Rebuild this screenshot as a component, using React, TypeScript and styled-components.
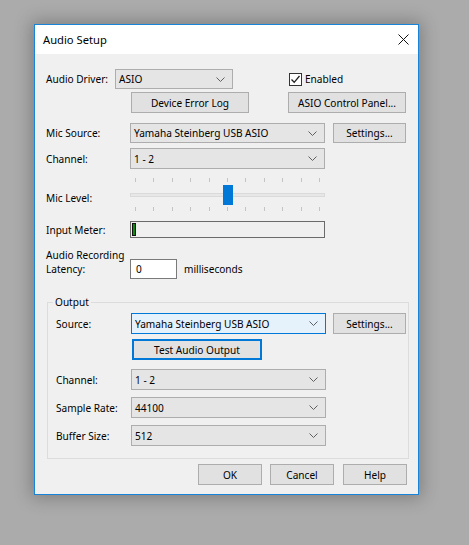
import React from 'react';
import styled, { createGlobalStyle } from 'styled-components';

const GlobalStyle = createGlobalStyle`
  html, body {
    margin: 0;
    padding: 0;
  }
  body {
    background: #ababab;
    font-family: 'Segoe UI', 'Noto Sans', sans-serif;
    font-size: 10.1px;
    color: #000;
  }
`;

const Desktop = styled.div`
  width: 469px;
  height: 545px;
  box-sizing: border-box;
  padding: 24px 0 0 34px;
  overflow: hidden;
`;

const Window = styled.div`
  width: 385px;
  box-sizing: border-box;
  border: 1px solid #1883d7;
  background: #f0f0f0;
  box-shadow: 0 0 16px 3px rgba(0, 0, 0, 0.25);
`;

const TitleBar = styled.div`
  height: 29px;
  background: #fff;
  display: flex;
  align-items: center;
  justify-content: space-between;
  padding: 0 9px 0 8px;
  font-size: 11.2px;
`;

const Body = styled.div`
  padding: 0 11px 9px 11px;
  display: flex;
  flex-direction: column;
`;

const Row = styled.div<{ $top: number; $h?: number; $align?: string }>`
  display: flex;
  align-items: ${(p) => p.$align || 'center'};
  margin-top: ${(p) => p.$top}px;
  height: ${(p) => p.$h ?? 21}px;
`;

const Label = styled.div<{ $w: number }>`
  width: ${(p) => p.$w}px;
  flex: none;
  white-space: nowrap;
`;

const MultiLabel = styled.div<{ $w: number }>`
  width: ${(p) => p.$w}px;
  flex: none;
  white-space: nowrap;
  line-height: 14px;
  margin-bottom: 3px;
`;

const Combo = styled.div<{ $w: number; $focus?: boolean }>`
  width: ${(p) => p.$w}px;
  height: 100%;
  flex: none;
  box-sizing: border-box;
  border: 1px solid ${(p) => (p.$focus ? '#0078d7' : '#adadad')};
  background: ${(p) => (p.$focus ? '#e5f1fb' : '#e5e5e5')};
  display: flex;
  align-items: center;
  justify-content: space-between;
  padding: 0 7px 0 3px;
  white-space: nowrap;
`;

const Button = styled.div<{ $w: number; $default?: boolean; $left?: number }>`
  width: ${(p) => p.$w}px;
  height: 100%;
  flex: none;
  box-sizing: border-box;
  margin-left: ${(p) => p.$left ?? 0}px;
  border: ${(p) => (p.$default ? '2px solid #0078d7' : '1px solid #adadad')};
  background: #e1e1e1;
  display: flex;
  align-items: center;
  justify-content: center;
  white-space: nowrap;
`;

const CheckWrap = styled.label<{ $left: number }>`
  display: flex;
  align-items: center;
  gap: 3px;
  margin-left: ${(p) => p.$left}px;
`;

const CheckBox = styled.span`
  width: 13px;
  height: 13px;
  box-sizing: border-box;
  border: 1px solid #333;
  background: #fff;
  display: flex;
  align-items: center;
  justify-content: center;
`;

const Slider = styled.div`
  width: 195px;
  height: 100%;
  flex: none;
  display: flex;
  flex-direction: column;
`;

const Ticks = styled.div`
  height: 4px;
  display: flex;
  justify-content: space-between;
  padding: 0 5px;
`;

const Tick = styled.span`
  width: 1px;
  height: 4px;
  background: #c4c4c4;
`;

const TrackArea = styled.div`
  flex: 1;
  display: grid;
  align-items: center;
  & > * {
    grid-area: 1 / 1;
  }
`;

const Track = styled.div`
  height: 4px;
  box-sizing: border-box;
  border: 1px solid #dadada;
  background: #e7e7e7;
`;

const Thumb = styled.div`
  width: 10px;
  height: 20px;
  background: #0078d7;
`;

const Meter = styled.div`
  width: 195px;
  height: 100%;
  flex: none;
  box-sizing: border-box;
  border: 1px solid #6b6b6b;
  background: #f0f0f0;
  padding: 1px;
  display: flex;
`;

const MeterBar = styled.div`
  width: 4px;
  box-sizing: border-box;
  border: 1px solid #111;
  background: #0b8a0b;
`;

const Edit = styled.div`
  width: 47px;
  height: 20px;
  flex: none;
  box-sizing: border-box;
  border: 1px solid #7a7a7a;
  background: #fff;
  padding-left: 5px;
  display: flex;
  align-items: center;
`;

const Unit = styled.span`
  margin-left: 7px;
  align-self: center;
  margin-top: 10px;
`;

const Group = styled.fieldset`
  margin: 15px -2px 0 1px;
  padding: 0 1px 12px 8px;
  border: 1px solid #dcdcdc;
  min-width: 0;
`;

const Legend = styled.legend`
  padding: 0 2px;
  margin-left: -3px;
  line-height: 16px;
`;

const Footer = styled.div`
  display: flex;
  justify-content: flex-end;
  gap: 8px;
  margin-top: 5px;
  height: 21px;
`;

const Chevron = () => (
  <svg width="9" height="5" viewBox="0 0 9 5">
    <path d="M0.5 0.5 L4.5 4.5 L8.5 0.5" fill="none" stroke="#606060" strokeWidth="1" />
  </svg>
);

const CloseIcon = () => (
  <svg width="11" height="11" viewBox="0 0 11 11">
    <path d="M0.5 0.5 L10.5 10.5 M10.5 0.5 L0.5 10.5" stroke="#111" strokeWidth="1" />
  </svg>
);

const CheckMark = () => (
  <svg width="11" height="11" viewBox="0 0 11 11">
    <path d="M1.5 5.5 L4.2 8.3 L9.5 2" fill="none" stroke="#222" strokeWidth="1.3" />
  </svg>
);

const ticks = Array.from({ length: 11 });
const micLevel = 50;

export default function App() {
  return (
    <Desktop>
      <GlobalStyle />
      <Window>
        <TitleBar>
          <span>Audio Setup</span>
          <CloseIcon />
        </TitleBar>
        <Body>
          <Row $top={15} $h={20}>
            <Label $w={69}>Audio Driver:</Label>
            <Combo $w={118}>
              ASIO
              <Chevron />
            </Combo>
            <CheckWrap $left={56}>
              <CheckBox>
                <CheckMark />
              </CheckBox>
              Enabled
            </CheckWrap>
          </Row>
          <Row $top={3}>
            <Button $w={118} $left={85}>
              Device Error Log
            </Button>
            <Button $w={118} $left={39}>
              ASIO Control Panel...
            </Button>
          </Row>
          <Row $top={10} $h={20}>
            <Label $w={84}>Mic Source:</Label>
            <Combo $w={195}>
              Yamaha Steinberg USB ASIO
              <Chevron />
            </Combo>
            <Button $w={73} $left={8}>
              Settings...
            </Button>
          </Row>
          <Row $top={5}>
            <Label $w={84}>Channel:</Label>
            <Combo $w={195}>
              1 - 2
              <Chevron />
            </Combo>
          </Row>
          <Row $top={9} $h={33}>
            <Label $w={84} style={{ marginTop: 7 }}>
              Mic Level:
            </Label>
            <Slider>
              <Ticks>
                {ticks.map((_, i) => (
                  <Tick key={i} />
                ))}
              </Ticks>
              <TrackArea>
                <Track />
                <Thumb style={{ marginLeft: (micLevel / 100) * 185 }} />
              </TrackArea>
              <Ticks>
                {ticks.map((_, i) => (
                  <Tick key={i} />
                ))}
              </Ticks>
            </Slider>
          </Row>
          <Row $top={10} $h={17}>
            <Label $w={84}>Input Meter:</Label>
            <Meter>
              <MeterBar />
            </Meter>
          </Row>
          <Row $top={10} $h={31} $align="flex-end">
            <MultiLabel $w={84}>
              Audio Recording
              <br />
              Latency:
            </MultiLabel>
            <Edit>0</Edit>
            <Unit>milliseconds</Unit>
          </Row>
          <Group>
            <Legend>Output</Legend>
            <Row $top={3}>
              <Label $w={75}>Source:</Label>
              <Combo $w={195} $focus>
                Yamaha Steinberg USB ASIO
                <Chevron />
              </Combo>
              <Button $w={73} $left={7}>
                Settings...
              </Button>
            </Row>
            <Row $top={5}>
              <Button $w={130} $left={76} $default>
                Test Audio Output
              </Button>
            </Row>
            <Row $top={9}>
              <Label $w={75}>Channel:</Label>
              <Combo $w={195}>
                1 - 2
                <Chevron />
              </Combo>
            </Row>
            <Row $top={7}>
              <Label $w={75}>Sample Rate:</Label>
              <Combo $w={195}>
                44100
                <Chevron />
              </Combo>
            </Row>
            <Row $top={7}>
              <Label $w={75}>Buffer Size:</Label>
              <Combo $w={195}>
                512
                <Chevron />
              </Combo>
            </Row>
          </Group>
          <Footer>
            <Button $w={64}>OK</Button>
            <Button $w={64}>Cancel</Button>
            <Button $w={64} $left={1}>
              Help
            </Button>
          </Footer>
        </Body>
      </Window>
    </Desktop>
  );
}
